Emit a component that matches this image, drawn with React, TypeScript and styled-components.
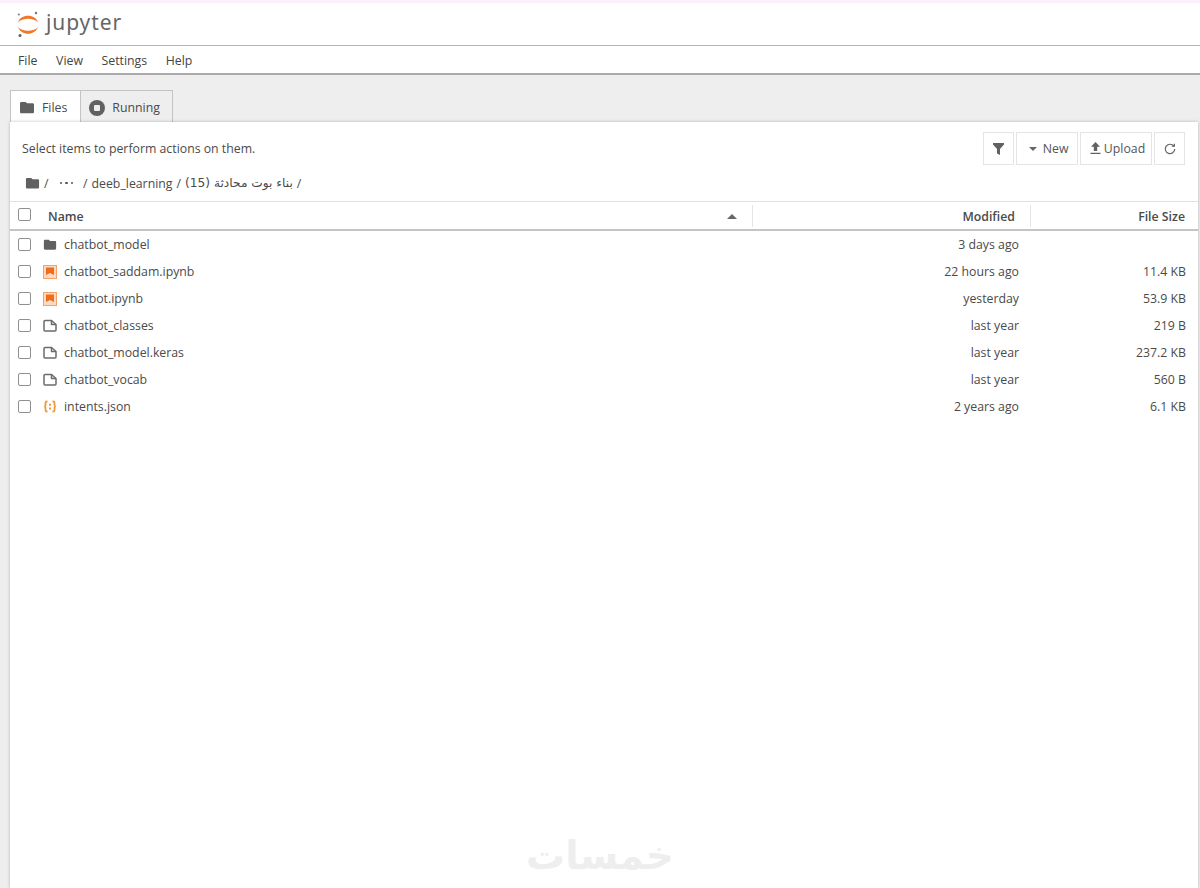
import * as React from "react";
import styled, { createGlobalStyle } from "styled-components";

const GlobalStyle = createGlobalStyle`
  html, body {
    margin: 0;
    padding: 0;
    height: 100%;
    overflow: hidden;
    background: #eeeeee;
  }
  #root {
    height: 100%;
  }
`;

const Page = styled.div`
  height: 888px;
  display: flex;
  flex-direction: column;
  font-family: "Open Sans", "DejaVu Sans", sans-serif;
  font-size: 12.3px;
  color: #4a4a4a;
`;

const TopBar = styled.div`
  height: 42px;
  flex-shrink: 0;
  display: flex;
  align-items: center;
  padding-left: 17px;
  gap: 7px;
  background: #fff;
  border-top: 3px solid #fbeffa;
  border-bottom: 1px solid #b5b5b5;
`;

const LogoText = styled.span`
  font-family: "Noto Sans", sans-serif;
  font-size: 21px;
  letter-spacing: 0.9px;
  color: #666;
  line-height: 1;
  margin-top: -4px;
`;

const MenuBar = styled.div`
  height: 26px;
  flex-shrink: 0;
  display: flex;
  align-items: center;
  gap: 18.6px;
  padding: 1px 0 0 18px;
  background: #fff;
  border-bottom: 2px solid #a9a9a9;
`;

const MenuItem = styled.span`
  color: #444;
`;

const Main = styled.div`
  flex: 1;
  display: flex;
  flex-direction: column;
  padding: 15px 2px 0 10px;
  min-height: 0;
`;

const Tabs = styled.div`
  display: flex;
  height: 32px;
  flex-shrink: 0;
`;

const Tab = styled.div<{ $active?: boolean }>`
  display: flex;
  align-items: center;
  gap: 7px;
  padding: 2px ${(p) => (p.$active ? "13px" : "12px")} 0 8px;
  background: ${(p) => (p.$active ? "#fff" : "#eeeeee")};
  border: 1px solid #c4c4c4;
  border-bottom: none;
  border-left-width: ${(p) => (p.$active ? "1px" : "0")};
  box-sizing: border-box;
  color: #4a4a4a;
`;

const Panel = styled.div`
  flex: 1;
  position: relative;
  background: #fff;
  box-shadow: 0 0 3px rgba(0, 0, 0, 0.25);
  display: flex;
  flex-direction: column;
  min-height: 0;
`;

const ToolRow = styled.div`
  height: 43px;
  flex-shrink: 0;
  display: flex;
  align-items: center;
  justify-content: space-between;
  box-sizing: border-box;
  padding: 10px 13px 0 12px;
`;

const Hint = styled.span`
  color: #4a4a4a;
`;

const Buttons = styled.div`
  display: flex;
  gap: 2px;
`;

const ToolButton = styled.div<{ $w: number; $shift?: number }>`
  width: ${(p) => p.$w}px;
  height: 33px;
  box-sizing: border-box;
  border: 1px solid #e4e4e4;
  padding-left: ${(p) => p.$shift ?? 0}px;
  display: flex;
  align-items: center;
  justify-content: center;
  gap: 3px;
  color: #555;
  background: #fff;
`;

const Crumbs = styled.div`
  height: 36px;
  flex-shrink: 0;
  display: flex;
  align-items: center;
  padding-left: 15px;
  gap: 4px;
  box-sizing: border-box;
`;

const MoreDots = styled.span`
  display: flex;
  gap: 3px;
  margin: 0 6px 0 7px;
`;

const Dot = styled.i`
  width: 2.5px;
  height: 2.5px;
  border-radius: 50%;
  background: #555;
`;

const ArabicCrumb = styled.span`
  font-family: "DejaVu Sans", sans-serif;
  font-size: 12.2px;
`;

const HeaderRow = styled.div`
  height: 30px;
  flex-shrink: 0;
  display: flex;
  align-items: center;
  box-sizing: border-box;
  border-top: 1px solid #e0e0e0;
  border-bottom: 2px solid #c4c4c4;
  font-weight: 600;
  color: #4a4a4a;
`;

const HeadCheck = styled.div`
  margin-top: -3px;
`;

const NameHead = styled.div`
  flex: 1;
  display: flex;
  align-items: center;
  justify-content: space-between;
  padding: 2px 15px 0 17px;
  height: 100%;
  box-sizing: border-box;
`;

const ColHead = styled.div<{ $w: number; $pad: number }>`
  width: ${(p) => p.$w}px;
  height: 22px;
  flex-shrink: 0;
  display: flex;
  align-items: center;
  justify-content: flex-end;
  box-sizing: border-box;
  padding: 1px ${(p) => p.$pad}px 0 0;
  border-left: 1px solid #e4e4e4;
`;

const Check = styled.div`
  width: 13px;
  height: 13px;
  margin-left: 8px;
  flex-shrink: 0;
  box-sizing: border-box;
  border: 1px solid #909090;
  border-radius: 2px;
  background: #fff;
`;

const List = styled.div`
  display: flex;
  flex-direction: column;
`;

const Row = styled.div`
  height: 27px;
  display: flex;
  align-items: center;
  color: #4a4a4a;
`;

const IconSlot = styled.div`
  width: 14px;
  height: 16px;
  margin-left: 12px;
  margin-right: 7px;
  flex-shrink: 0;
  display: flex;
  align-items: center;
  justify-content: center;
`;

const FileName = styled.span`
  flex: 1;
`;

const Modified = styled.span`
  width: 180px;
  text-align: right;
  flex-shrink: 0;
`;

const Size = styled.span`
  width: 179px;
  text-align: right;
  padding-right: 12px;
  box-sizing: border-box;
  flex-shrink: 0;
`;

const Watermark = styled.div`
  position: absolute;
  left: 516px;
  bottom: 8px;
  font-family: "DejaVu Sans", sans-serif;
  font-size: 39px;
  font-weight: 700;
  line-height: 1.2;
  color: #eeeeee;
`;

const JupyterMark = () => (
  <svg width="22" height="26" viewBox="0 0 22 26">
    <path d="M1 11.500C3 2.500 19 2.500 21 11.500C17 6.500 5 6.500 1 11.500Z" fill="#f37726" />
    <path d="M1 16C4 25 18 25 21 16C17 21 5 21 1 16Z" fill="#f37726" />
    <circle cx="19" cy="2" r="1.200" fill="#767677" />
    <circle cx="1.800" cy="3.500" r="1" fill="#767677" />
    <circle cx="3" cy="24.500" r="1.500" fill="#616262" />
  </svg>
);

const FolderIcon = ({ size = 15 }: { size?: number }) => (
  <svg width={size} height={size} viewBox="0 0 24 24">
    <path d="M10 3H3.500C2.400 3 1.500 3.900 1.500 5v13c0 1.100.9 2 2 2h17c1.100 0 2-.9 2-2V7c0-1.100-.9-2-2-2H12z" fill="#616161" />
  </svg>
);

const RunningIcon = () => (
  <svg width="16" height="16" viewBox="0 0 16 16">
    <circle cx="8" cy="8" r="8" fill="#616161" />
    <rect x="5" y="5" width="6" height="6" rx="1" fill="#eeeeee" />
  </svg>
);

const NotebookIcon = () => (
  <svg width="14" height="14" viewBox="0 0 14 14">
    <rect x="0.500" y="0.500" width="13" height="13" fill="#fbd9c2" stroke="#f4a26c" />
    <path d="M3 2.500h8v7.500L7 8 3 10z" fill="#ef6c1a" />
  </svg>
);

const FileIcon = () => (
  <svg width="14" height="14" viewBox="0 0 14 14" fill="none" strokeLinejoin="round">
    <path d="M1 2.500c0-.6.400-1 1-1h6.500l4.500 4v5.500c0 .6-.4 1-1 1H2c-.6 0-1-.4-1-1z" stroke="#6b6b6b" strokeWidth="1.500" />
    <path d="M8.500 1.500v4h4.500" stroke="#6b6b6b" strokeWidth="1.500" />
  </svg>
);

const JsonIcon = () => (
  <svg width="14" height="13" viewBox="0 0 14 13" fill="none" stroke="#f29b38" strokeWidth="1.800">
    <path d="M4.500 1.500H3.600C2.800 1.500 2.500 2 2.500 2.700V5C2.500 5.700 2 6.500 1.200 6.500 2 6.500 2.500 7.300 2.500 8v2.300c0 .7.300 1.200 1.100 1.200h.9" />
    <path d="M9.500 1.500h.9c.8 0 1.100.5 1.100 1.200V5c0 .7.500 1.500 1.300 1.500-.8 0-1.300.8-1.300 1.500v2.300c0 .7-.3 1.200-1.100 1.200h-.9" />
    <path d="M7 3.800v2M7 7.500v2" strokeWidth="2" />
  </svg>
);

const FilterIcon = () => (
  <svg width="11" height="12" viewBox="0 0 11 12">
    <path d="M0 0h11v1.500L7 6v6L4 10.500V6L0 1.500z" fill="#616161" />
  </svg>
);

const CaretDown = () => (
  <svg width="8" height="4" viewBox="0 0 8 4">
    <path d="M0 0h8L4 4z" fill="#666" />
  </svg>
);

const CaretUp = () => (
  <svg width="10" height="5" viewBox="0 0 10 5">
    <path d="M0 5h10L5 0z" fill="#666" />
  </svg>
);

const UploadIcon = () => (
  <svg width="11" height="13" viewBox="0 0 11 13">
    <path d="M5.500 0L10 4.800H7.200V9H3.800V4.800H1zM.5 10.700h10V12H.5z" fill="#616161" />
  </svg>
);

const RefreshIcon = () => (
  <svg width="12" height="12" viewBox="0 0 12 12" fill="none">
    <path d="M9.800 3.200A4.700 4.700 0 1 0 10.700 6" stroke="#666" strokeWidth="1.200" />
    <path d="M7.500 3.800h3.500V.3z" fill="#666" />
  </svg>
);

type Kind = "folder" | "notebook" | "file" | "json";

const files: { name: string; kind: Kind; modified: string; size: string }[] = [
  { name: "chatbot_model", kind: "folder", modified: "3 days ago", size: "" },
  { name: "chatbot_saddam.ipynb", kind: "notebook", modified: "22 hours ago", size: "11.4 KB" },
  { name: "chatbot.ipynb", kind: "notebook", modified: "yesterday", size: "53.9 KB" },
  { name: "chatbot_classes", kind: "file", modified: "last year", size: "219 B" },
  { name: "chatbot_model.keras", kind: "file", modified: "last year", size: "237.2 KB" },
  { name: "chatbot_vocab", kind: "file", modified: "last year", size: "560 B" },
  { name: "intents.json", kind: "json", modified: "2 years ago", size: "6.1 KB" },
];

const kindIcon = (kind: Kind) => {
  if (kind === "folder") return <FolderIcon size={16} />;
  if (kind === "notebook") return <NotebookIcon />;
  if (kind === "json") return <JsonIcon />;
  return <FileIcon />;
};

export default function App() {
  return (
    <Page>
      <GlobalStyle />
      <TopBar>
        <JupyterMark />
        <LogoText>jupyter</LogoText>
      </TopBar>
      <MenuBar>
        <MenuItem>File</MenuItem>
        <MenuItem>View</MenuItem>
        <MenuItem>Settings</MenuItem>
        <MenuItem>Help</MenuItem>
      </MenuBar>
      <Main>
        <Tabs>
          <Tab $active>
            <FolderIcon size={16} />
            Files
          </Tab>
          <Tab>
            <RunningIcon />
            Running
          </Tab>
        </Tabs>
        <Panel>
          <ToolRow>
            <Hint>Select items to perform actions on them.</Hint>
            <Buttons>
              <ToolButton $w={31}>
                <FilterIcon />
              </ToolButton>
              <ToolButton $w={62} $shift={3}>
                <CaretDown />
                &nbsp;New
              </ToolButton>
              <ToolButton $w={72} $shift={3}>
                <UploadIcon />
                Upload
              </ToolButton>
              <ToolButton $w={31}>
                <RefreshIcon />
              </ToolButton>
            </Buttons>
          </ToolRow>
          <Crumbs>
            <FolderIcon />
            <span>/</span>
            <MoreDots>
              <Dot />
              <Dot />
              <Dot />
            </MoreDots>
            <span>/</span>
            <span>deeb_learning</span>
            <span>/</span>
            <ArabicCrumb dir="rtl">بناء بوت محادثة (15)</ArabicCrumb>
            <span>/</span>
          </Crumbs>
          <HeaderRow>
            <HeadCheck>
              <Check />
            </HeadCheck>
            <NameHead>
              <span>Name</span>
              <CaretUp />
            </NameHead>
            <ColHead $w={278} $pad={15}>Modified</ColHead>
            <ColHead $w={168} $pad={13}>File Size</ColHead>
          </HeaderRow>
          <List>
            {files.map((f) => (
              <Row key={f.name}>
                <Check />
                <IconSlot>{kindIcon(f.kind)}</IconSlot>
                <FileName>{f.name}</FileName>
                <Modified>{f.modified}</Modified>
                <Size>{f.size}</Size>
              </Row>
            ))}
          </List>
          <Watermark>خمسات</Watermark>
        </Panel>
      </Main>
    </Page>
  );
}
